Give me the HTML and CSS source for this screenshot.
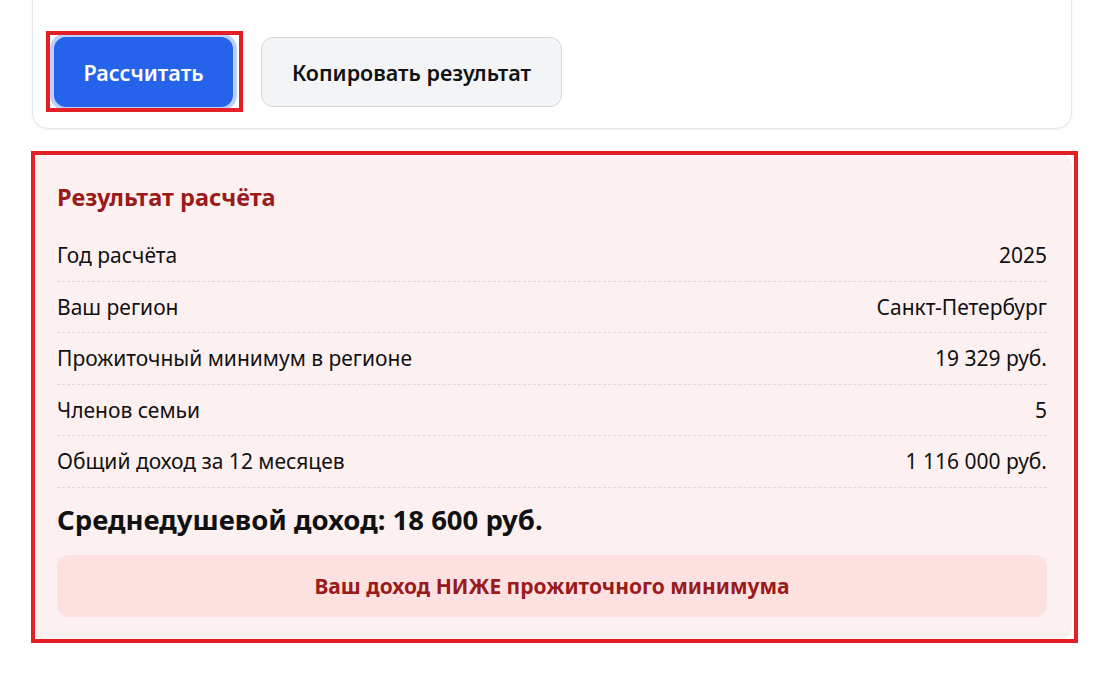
FILE: index.html
```html
<!DOCTYPE html>
<html lang="ru">
<head>
  <meta charset="UTF-8">
  <meta name="viewport" content="width=device-width, initial-scale=1.0">
  <title>Расчёт среднедушевого дохода</title>
  <link rel="stylesheet" href="styles.css">
</head>
<body>
  <div class="page">
    <div class="form-card">
      <div class="actions">
        <button class="btn btn-primary marked" id="calc-btn">Рассчитать</button>
        <button class="btn btn-secondary" id="copy-btn">Копировать результат</button>
      </div>
    </div>

    <div class="result marked-box">
      <h2 class="result-title">Результат расчёта</h2>
      <div class="result-row">
        <span>Год расчёта</span>
        <span>2025</span>
      </div>
      <div class="result-row">
        <span>Ваш регион</span>
        <span>Санкт-Петербург</span>
      </div>
      <div class="result-row">
        <span>Прожиточный минимум в регионе</span>
        <span>19 329 руб.</span>
      </div>
      <div class="result-row">
        <span>Членов семьи</span>
        <span>5</span>
      </div>
      <div class="result-row">
        <span>Общий доход за 12 месяцев</span>
        <span>1 116 000 руб.</span>
      </div>
      <div class="result-total">Среднедушевой доход: 18 600 руб.</div>
      <div class="result-alert">Ваш доход НИЖЕ прожиточного минимума</div>
    </div>
  </div>
</body>
</html>
```

FILE: styles.css
```css
* {
  margin: 0;
  padding: 0;
  box-sizing: border-box;
}
body {
  background: #fff;
  color: #111;
  font-family: 'Noto Sans', 'Open Sans', Arial, sans-serif;
  overflow: hidden;
}
.page {
  display: flow-root;
  padding: 0 38px 60px 32px;
}
.form-card {
  margin-top: -20px;
  padding: 56px 21px 21px;
  background: #fff;
  border: 1px solid #e6e7ea;
  border-radius: 16px;
  box-shadow: 0 1px 3px rgba(0, 0, 0, 0.05);
}
.actions {
  display: flex;
  gap: 28px;
}
.btn {
  height: 70px;
  padding: 0 20px;
  border-radius: 12px;
  font-family: inherit;
  font-size: 21.5px;
  font-weight: 600;
  cursor: pointer;
}
.btn-primary {
  position: relative;
  width: 179px;
  background: #2563eb;
  color: #fff;
  border: none;
  box-shadow: 0 0 0 4px rgba(37, 99, 235, 0.3);
}
.btn-secondary {
  width: 301px;
  background: #f3f4f6;
  color: #111;
  border: 1px solid #d4d7dd;
}
.marked::after {
  content: '';
  position: absolute;
  top: -6px;
  bottom: -5px;
  left: -8px;
  right: -10px;
  border: 4px solid #e41f28;
  pointer-events: none;
}
.result {
  position: relative;
  margin-top: 24px;
  padding: 29px 25px 23px;
  background: #fdf0f0;
  border-radius: 14px;
}
.marked-box::after {
  content: '';
  position: absolute;
  top: -2px;
  bottom: -3px;
  left: -1px;
  right: -6px;
  border: 4px solid #e41f28;
  pointer-events: none;
}
.result-title {
  font-size: 23.5px;
  font-weight: 700;
  color: #991b1b;
  line-height: 30px;
  margin-bottom: 18px;
}
.result-row {
  display: flex;
  justify-content: space-between;
  align-items: center;
  height: 51.5px;
  font-size: 21px;
  border-bottom: 1px dashed #ead3d3;
}
.result-total {
  font-size: 27.5px;
  font-weight: 700;
  line-height: 34px;
  margin: 15px 0 18px;
}
.result-alert {
  height: 62px;
  display: flex;
  align-items: center;
  justify-content: center;
  background: #fde1e1;
  border-radius: 12px;
  color: #991b1b;
  font-size: 21px;
  font-weight: 700;
}
```
